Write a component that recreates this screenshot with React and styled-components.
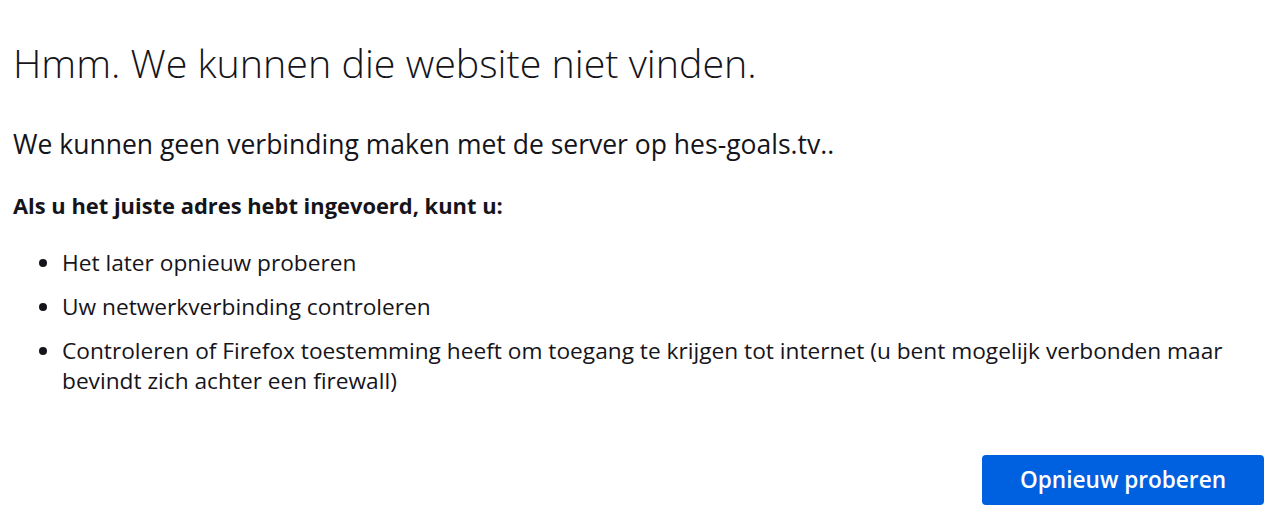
import React from "react";
import styled, { createGlobalStyle } from "styled-components";

const GlobalStyle = createGlobalStyle`
  html, body {
    margin: 0;
    padding: 0;
    background: #ffffff;
  }
  body {
    font-family: "Open Sans", "Noto Sans", sans-serif;
    color: #15141a;
  }
`;

const Page = styled.main`
  box-sizing: border-box;
  width: 1280px;
  padding: 40px 16px 0 13px;
  display: flex;
  flex-direction: column;
`;

const Title = styled.h1`
  margin: 0;
  font-size: 39.4px;
  line-height: 47.3px;
  font-weight: 300;
  white-space: nowrap;
`;

const Intro = styled.p`
  margin: 39px 0 0;
  font-size: 26.5px;
  line-height: 37px;
  font-weight: 400;
`;

const Lead = styled.p`
  margin: 28px 0 0;
  font-size: 21.9px;
  line-height: 30.7px;
  font-weight: 700;
`;

const List = styled.ul`
  margin: 25.5px 0 0;
  padding: 0 0 0 49px;
  display: flex;
  flex-direction: column;
  gap: 14px;
  font-size: 22.7px;
  line-height: 30px;
`;

const Item = styled.li`
  margin: 0;
`;

const Actions = styled.div`
  display: flex;
  justify-content: flex-end;
  margin-top: 59px;
`;

const Button = styled.button`
  height: 50px;
  padding: 0 38px;
  border: none;
  border-radius: 4px;
  background: #0061e0;
  color: #ffffff;
  font-family: "Open Sans", "Noto Sans", sans-serif;
  font-size: 22.6px;
  font-weight: 600;
  cursor: pointer;
`;

export default function App() {
  return (
    <>
      <GlobalStyle />
      <Page>
        <Title>Hmm. We kunnen die website niet vinden.</Title>
        <Intro>We kunnen geen verbinding maken met de server op hes-goals.tv..</Intro>
        <Lead>Als u het juiste adres hebt ingevoerd, kunt u:</Lead>
        <List>
          <Item>Het later opnieuw proberen</Item>
          <Item>Uw netwerkverbinding controleren</Item>
          <Item>
            Controleren of Firefox toestemming heeft om toegang te krijgen tot internet (u bent
            mogelijk verbonden maar bevindt zich achter een firewall)
          </Item>
        </List>
        <Actions>
          <Button>Opnieuw proberen</Button>
        </Actions>
      </Page>
    </>
  );
}
